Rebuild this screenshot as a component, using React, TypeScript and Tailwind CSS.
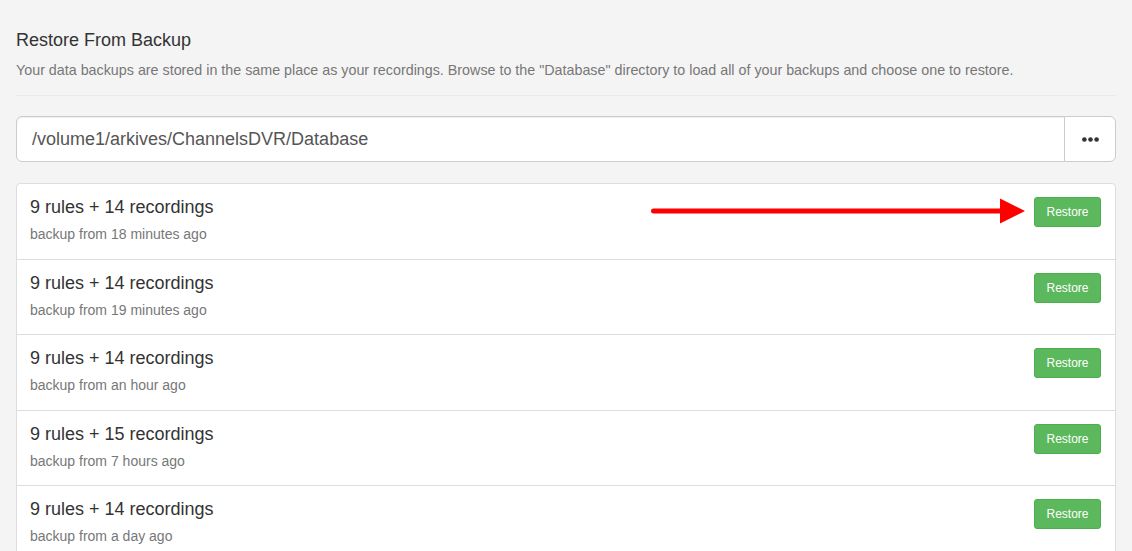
import React from 'react';

const BACKUPS = [
  { rules: 9, recordings: 14, age: '18 minutes ago' },
  { rules: 9, recordings: 14, age: '19 minutes ago' },
  { rules: 9, recordings: 14, age: 'an hour ago' },
  { rules: 9, recordings: 15, age: '7 hours ago' },
  { rules: 9, recordings: 14, age: 'a day ago' },
];

const BackupRow = ({
  rules,
  recordings,
  age,
  first,
}: {
  rules: number;
  recordings: number;
  age: string;
  first: boolean;
}) => (
  <div
    className={`relative flex items-start justify-between pl-[13px] pr-[14px] pt-[13px] pb-[14.5px] ${first ? '' : 'border-t border-[#ddd]'}`}
  >
    <div>
      <div className="text-[18px] leading-[20px] text-[#333]">
        {rules} rules + {recordings} recordings
      </div>
      <div className="mt-[7px] text-[14px] leading-[20px] text-[#777]">
        backup from {age}
      </div>
    </div>
    <button className="h-[30px] w-[67px] rounded-[3px] border border-[#4cae4c] bg-[#5cb85c] text-[12px] text-white">
      Restore
    </button>
  </div>
);

export default function App() {
  return (
    <div className="min-h-screen bg-[#f4f4f4] px-4 pt-[30px] font-['Liberation_Sans',Arial,sans-serif]">
      <h4 className="text-[18px] leading-[20px] text-[#333]">
        Restore From Backup
      </h4>
      <p className="mt-[10px] text-[14.3px] leading-[20px] text-[#777]">
        Your data backups are stored in the same place as your recordings.
        Browse to the "Database" directory to load all of your backups and
        choose one to restore.
      </p>
      <hr className="mt-[15px] border-t border-[#e9e9e9]" />

      {/* Path input */}
      <div className="mt-[20px] flex h-[46px]">
        <input
          readOnly
          value="/volume1/arkives/ChannelsDVR/Database"
          className="h-full flex-1 rounded-l-[6px] border border-[#ccc] bg-white px-[15px] text-[18px] text-[#555] shadow-[inset_0_1px_1px_rgba(0,0,0,0.075)] outline-none"
        />
        <button className="-ml-px flex h-full w-[52px] items-center justify-center rounded-r-[6px] border border-[#ccc] bg-white">
          <svg width="17" height="5" viewBox="0 0 17 5">
            <circle cx="2.4" cy="2.5" r="2.3" fill="#333" />
            <circle cx="8.5" cy="2.5" r="2.3" fill="#333" />
            <circle cx="14.6" cy="2.5" r="2.3" fill="#333" />
          </svg>
        </button>
      </div>

      {/* Backup list */}
      <div className="relative mt-[21px] rounded-[4px] border border-[#ddd] bg-white">
        {BACKUPS.map((b, i) => (
          <BackupRow key={i} {...b} first={i === 0} />
        ))}
        {/* Red annotation arrow */}
        <svg
          className="absolute left-[634px] top-[13px]"
          width="376"
          height="28"
          viewBox="0 0 376 28"
        >
          <line
            x1="2.5"
            y1="14"
            x2="352"
            y2="14"
            stroke="#ff0000"
            strokeWidth="5"
            strokeLinecap="round"
          />
          <polygon points="349,1.5 374,14 349,26.5" fill="#ff0000" />
        </svg>
      </div>
    </div>
  );
}
